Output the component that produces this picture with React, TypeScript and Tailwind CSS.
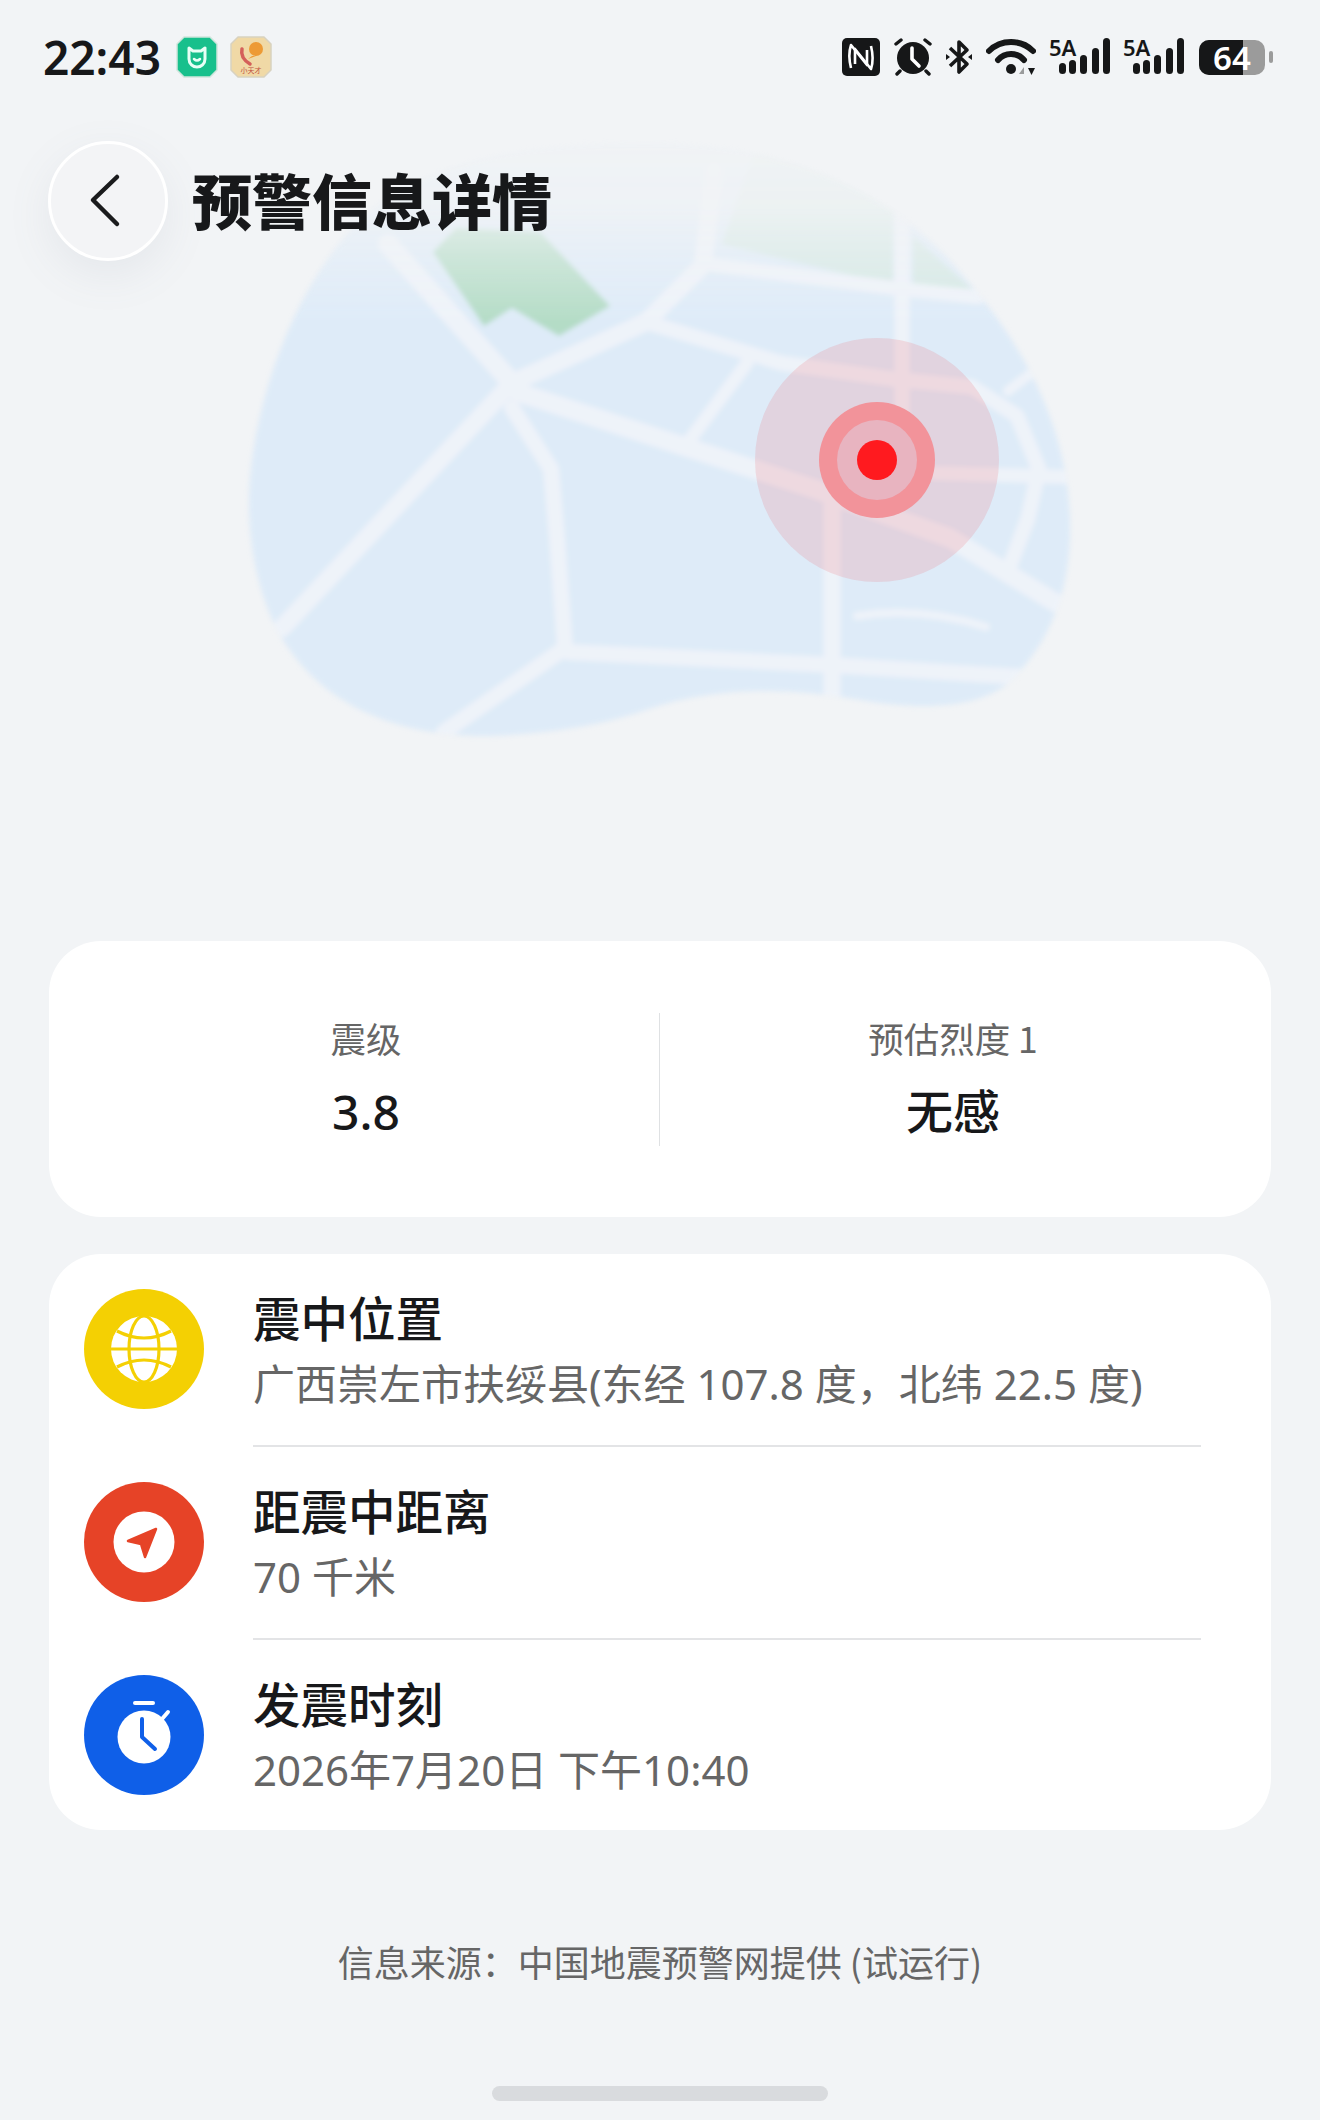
const fontStack = '"Noto Sans CJK SC", sans-serif';
const latinStack = '"Noto Sans", "Noto Sans CJK SC", sans-serif';

// Faded city map behind the page header
const MapBackdrop = () => (
    <svg
        className="absolute left-[220px] top-[130px]"
        width="880"
        height="640"
        viewBox="0 0 880 640"
        fill="none"
    >
        <defs>
            <filter id="soft" x="-5%" y="-5%" width="110%" height="110%">
                <feGaussianBlur stdDeviation="2.4" />
            </filter>
            <linearGradient id="fade" x1="0" y1="0" x2="0" y2="1">
                <stop offset="0" stopColor="#fff" stopOpacity="0.04" />
                <stop offset="0.12" stopColor="#fff" stopOpacity="0.18" />
                <stop offset="0.2" stopColor="#fff" stopOpacity="0.6" />
                <stop offset="0.3" stopColor="#fff" stopOpacity="1" />
                <stop offset="1" stopColor="#fff" stopOpacity="1" />
            </linearGradient>
            <mask id="fadeMask">
                <rect width="880" height="640" fill="url(#fade)" />
            </mask>
            <clipPath id="blob">
                <path d="M29 367C31 286 67 171 129 102C180 41 281 12 426 12C561 12 673 61 741 143C802 212 847 294 850 388C852 449 836 510 786 555C752 580 696 580 634 569C561 557 494 557 426 580C382 596 314 606 258 606C168 604 95 571 56 498C36 457 28 408 29 367Z" />
            </clipPath>
        </defs>
        <g mask="url(#fadeMask)" filter="url(#soft)">
            <g clipPath="url(#blob)">
                <rect width="880" height="640" fill="#deebf8" />
                <path d="M502 114L673 155V24H533Z" fill="#d4e8e4" />
                <path d="M693 106L752 159L693 157Z" fill="#d4e8e4" />
                <path d="M213 122L236 98L320 102L390 176L339 206L292 178L264 196Z" fill="#b4dcc6" />
                <g stroke="#eef3f9" strokeWidth="15" strokeLinejoin="round" strokeLinecap="round">
                    <path d="M168 114L292 253" strokeWidth="20" />
                    <path d="M292 278L331 339L337 408L345 518L224 602" strokeWidth="16" />
                    <path d="M62 498L292 253L426 192L483 135L494 41" strokeWidth="18" />
                    <path d="M297 262L595 359L730 408L836 473" strokeWidth="19" />
                    <path d="M426 192L561 233L673 249L752 257L797 286L819 339L808 388L791 433" />
                    <path d="M466 315L527 233" strokeWidth="13" />
                    <path d="M682 16V327" strokeWidth="15" />
                    <path d="M612 376V567" strokeWidth="17" />
                    <path d="M348 522L612 535L802 547" strokeWidth="16" />
                    <path d="M494 135L682 159L758 167" strokeWidth="14" />
                    <path d="M713 343L847 347" strokeWidth="14" />
                    <path d="M788 261L814 241" strokeWidth="10" />
                    <path d="M637 486Q701 476 766 497" strokeWidth="8" />
                </g>
            </g>
        </g>
        <circle cx="657" cy="330" r="122" fill="#f04a50" fillOpacity="0.15" />
        <circle cx="657" cy="330" r="58" fill="#f2939a" />
        <circle cx="657" cy="330" r="40" fill="#e8b4c0" />
        <circle cx="657" cy="330" r="20" fill="#ff1a1f" />
    </svg>
);

const AppBadges = () => (
    <div className="flex gap-[12px]">
        <svg width="42" height="42" viewBox="0 0 42 42">
            <path d="M8 1H34L41 8V34L34 41H8L1 34V8Z" fill="#18c08c" stroke="#cfe5dc" strokeWidth="1.5" strokeLinejoin="round" />
            <path d="M13 12L17 15H25L29 12V23C29 28 25 31 21 31C17 31 13 28 13 23Z" fill="none" stroke="#e8fff6" strokeWidth="3" strokeLinejoin="round" />
            <path d="M18 23Q21 26 24 23" fill="none" stroke="#e8fff6" strokeWidth="2.5" strokeLinecap="round" />
        </svg>
        <svg width="42" height="42" viewBox="0 0 42 42">
            <path d="M8 1H34L41 8V34L34 41H8L1 34V8Z" fill="#f0d9a6" stroke="#d8d2c0" strokeWidth="1.5" strokeLinejoin="round" />
            <path d="M12 13Q10 22 20 28" fill="none" stroke="#d4605a" strokeWidth="3.5" strokeLinecap="round" />
            <circle cx="26" cy="13" r="7" fill="#ed9a35" />
            <path d="M22 20L18 23L26 20Z" fill="#ed9a35" />
            <text x="21" y="37" fontSize="7" fill="#c0503f" textAnchor="middle" fontFamily={fontStack}>
                小天才
            </text>
        </svg>
    </div>
);

const NfcIcon = () => (
    <svg width="38" height="38" viewBox="0 0 38 38">
        <rect width="38" height="38" rx="5" fill="#161718" />
        <path d="M9 30C7 22 7 13 9 7L25 27V12" fill="none" stroke="#fff" strokeWidth="2.6" strokeLinejoin="round" />
        <path d="M29 8C31 16 31 25 29 31L13 11V26" fill="none" stroke="#fff" strokeWidth="2.6" strokeLinejoin="round" />
    </svg>
);

const AlarmIcon = () => (
    <svg width="38" height="38" viewBox="0 0 38 38">
        <circle cx="19" cy="20" r="16" fill="#161718" />
        <path d="M2 6L7 2M36 6L31 2M6 33L3 36M32 33L35 36" stroke="#161718" strokeWidth="3.4" strokeLinecap="round" />
        <path d="M18 10V21L25 28" fill="none" stroke="#fff" strokeWidth="3.6" strokeLinecap="round" strokeLinejoin="round" />
    </svg>
);

const BluetoothIcon = () => (
    <svg width="26" height="38" viewBox="0 0 26 38">
        <path d="M4 10L21 26L13 34V4L21 12L4 28" fill="none" stroke="#161718" strokeWidth="3.6" strokeLinejoin="round" />
        <path d="M0 16L4 19L0 22ZM26 16L22 19L26 22Z" fill="#161718" />
    </svg>
);

const WifiIcon = () => (
    <svg width="50" height="38" viewBox="0 0 50 38">
        <path d="M3 13C15 1 35 1 47 13" fill="none" stroke="#161718" strokeWidth="6" strokeLinecap="round" />
        <path d="M12 22C19 14 31 14 38 22" fill="none" stroke="#161718" strokeWidth="6" strokeLinecap="round" />
        <circle cx="25" cy="31" r="5" fill="#161718" />
        <path d="M33 36L38 29V36Z" fill="#9a9b9c" />
        <path d="M42 30H49L45.5 37Z" fill="#161718" />
    </svg>
);

const SignalIcon = () => (
    <div className="relative h-[38px] w-[61px]">
        <span
            className="absolute left-0 top-[-3px] text-[22px] leading-[24px] font-semibold text-[#161718]"
            style={{ fontFamily: latinStack }}
        >
            5A
        </span>
        <svg width="61" height="38" viewBox="0 0 61 38">
            <rect x="10" y="25" width="7" height="11" rx="3.5" fill="#161718" />
            <rect x="20" y="22" width="7" height="14" rx="3.5" fill="#161718" />
            <rect x="31" y="17" width="7" height="19" rx="3.5" fill="#161718" />
            <rect x="43" y="10" width="7" height="26" rx="3.5" fill="#161718" />
            <rect x="54" y="0" width="7" height="36" rx="3.5" fill="#161718" />
        </svg>
    </div>
);

const Battery = () => (
    <div className="flex items-center gap-[4px]">
        <div className="relative h-[35px] w-[66px]">
            <div className="flex h-full w-full overflow-hidden rounded-[10px] bg-[#9b9b9b]">
                <div className="w-[44px] bg-[#161718]" />
            </div>
            <span
                className="absolute inset-0 flex items-center justify-center text-[33px] leading-none font-semibold text-white"
                style={{ fontFamily: latinStack }}
            >
                64
            </span>
        </div>
        <div className="h-[12px] w-[4px] rounded-full bg-[#9b9b9b]" />
    </div>
);

const StatusBar = () => (
    <div className="flex h-[114px] items-center justify-between pl-[43px] pr-[47px]">
        <div className="flex items-center gap-[15px]">
            <span
                className="text-[46px] leading-none font-semibold text-[#17181a]"
                style={{ fontFamily: latinStack }}
            >
                22:43
            </span>
            <AppBadges />
        </div>
        <div className="flex items-center">
            <div className="mr-[14px]"><NfcIcon /></div>
            <div className="mr-[14px]"><AlarmIcon /></div>
            <div className="mr-[14px]"><BluetoothIcon /></div>
            <div className="mr-[13px]"><WifiIcon /></div>
            <div className="mr-[13px]"><SignalIcon /></div>
            <div className="mr-[15px]"><SignalIcon /></div>
            <Battery />
        </div>
    </div>
);

const GlobeIcon = () => (
    <svg width="120" height="120" viewBox="0 0 120 120">
        <circle cx="60" cy="60" r="60" fill="#f4d003" />
        <circle cx="60" cy="60" r="33" fill="#fff" />
        <g fill="none" stroke="#f4d003" strokeWidth="3.2">
            <path d="M27 60H93" />
            <ellipse cx="60" cy="60" rx="15" ry="33" />
            <path d="M33 42Q60 56 87 42" />
            <path d="M33 78Q60 64 87 78" />
        </g>
    </svg>
);

const DistanceIcon = () => (
    <svg width="120" height="120" viewBox="0 0 120 120">
        <circle cx="60" cy="60" r="60" fill="#e64327" />
        <circle cx="60" cy="60" r="30.5" fill="#fff" />
        <path d="M72 47L44 59L57 62L61 75Z" fill="#e64327" stroke="#e64327" strokeWidth="2.5" strokeLinejoin="round" />
    </svg>
);

const StopwatchIcon = () => (
    <svg width="120" height="120" viewBox="0 0 120 120">
        <circle cx="60" cy="60" r="60" fill="#0f5fe8" />
        <circle cx="60" cy="62" r="26.5" fill="#fff" />
        <path d="M51 28H69" stroke="#fff" strokeWidth="4" strokeLinecap="round" />
        <path d="M78 44L84 37" stroke="#fff" strokeWidth="4" strokeLinecap="round" />
        <path d="M58 44V62L71 74" fill="none" stroke="#0f5fe8" strokeWidth="4" strokeLinecap="round" strokeLinejoin="round" />
    </svg>
);

const rows = [
    { icon: <GlobeIcon />, title: "震中位置", value: "广西崇左市扶绥县(东经 107.8 度，北纬 22.5 度)" },
    { icon: <DistanceIcon />, title: "距震中距离", value: "70 千米" },
    { icon: <StopwatchIcon />, title: "发震时刻", value: "2026年7月20日 下午10:40" },
];

export default function App() {
    return (
        <div
            className="flex h-[2120px] w-[1320px] flex-col overflow-hidden bg-[#f2f4f6] text-[#17181a]"
            style={{ fontFamily: fontStack }}
        >
            <div className="relative h-[941px] shrink-0">
                <MapBackdrop />
                <div className="relative">
                    <StatusBar />
                    <div className="mt-[27px] flex items-center gap-[24px] pl-[48px]">
                        <button className="flex h-[120px] w-[120px] items-center justify-center rounded-full border-[3px] border-white bg-[#f3f4f6] shadow-[0_14px_44px_rgba(120,130,150,0.1)]">
                            <svg width="118" height="118" viewBox="0 0 118 118" fill="none" className="shrink-0">
                                <path d="M68 35L44 58L68 82" stroke="#1a1b1d" strokeWidth="4.5" strokeLinecap="round" strokeLinejoin="round" />
                            </svg>
                        </button>
                        <h1 className="pb-[5px] text-[60px] leading-[80px] font-black">预警信息详情</h1>
                    </div>
                </div>
            </div>

            <section className="mx-[49px] flex h-[276px] shrink-0 items-center rounded-[52px] bg-white pl-[24px] pr-[25px]">
                <div className="flex flex-1 flex-col items-center pb-[3px]">
                    <p className="text-[35.5px] leading-[50px] text-[#666]">震级</p>
                    <p
                        className="mt-[19px] text-[48px] leading-[60px] font-medium"
                        style={{ fontFamily: latinStack }}
                    >
                        3.8
                    </p>
                </div>
                <div className="h-[133px] w-px bg-[#dfe1e3]" />
                <div className="flex flex-1 flex-col items-center pb-[6px]">
                    <p className="text-[35.5px] leading-[50px] text-[#666]">
                        预估烈度 1
                    </p>
                    <p className="mt-[16px] text-[47px] leading-[60px] font-medium">无感</p>
                </div>
            </section>

            <section className="mx-[49px] mt-[37px] shrink-0 rounded-[52px] bg-white pl-[35px] pr-[70px]">
                {rows.map((row, i) => (
                    <div
                        key={row.title}
                        className={`flex gap-[49px] ${i < rows.length - 1 ? "h-[193px]" : "h-[190px]"}`}
                    >
                        <div className="mt-[35px] h-[120px] w-[120px] shrink-0">{row.icon}</div>
                        <div
                            className={`h-full flex-1 pt-[33px] ${
                                i < rows.length - 1 ? "border-b-2 border-[#e3e4e6]" : ""
                            }`}
                        >
                            <p className="text-[47.5px] leading-[60px] font-medium">{row.title}</p>
                            <p
                                className="mt-[12px] text-[42px] leading-[50px] text-[#666]"
                                style={{ fontFamily: latinStack }}
                            >
                                {row.value}
                            </p>
                        </div>
                    </div>
                ))}
            </section>

            <p className="mt-[106px] text-center text-[36px] leading-[50px] text-[#666]">
                信息来源：中国地震预警网提供 (试运行)
            </p>

            <div className="mx-auto mt-[100px] h-[15px] w-[336px] rounded-full bg-[#d9dbde]" />
        </div>
    );
}
